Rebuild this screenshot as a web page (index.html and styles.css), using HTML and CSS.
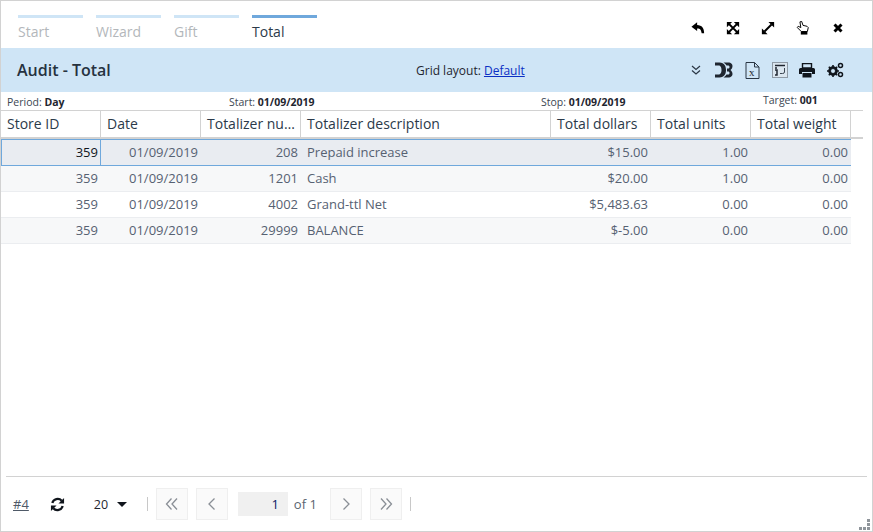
FILE: index.html
```html
<html>
    <head>
        <link rel="stylesheet" href="styles.css">
    </head>
    <body>
        <div class="window">
            <div class="topbar">
                <div class="steps">
                    <div class="step">Start</div>
                    <div class="step">Wizard</div>
                    <div class="step">Gift</div>
                    <div class="step current">Total</div>
                </div>
                <div class="window-tools">
                    <svg width="14" height="14" viewBox="0 0 16 16"><path d="M7 1.5 L0.5 6.5 L7 11.5 V8.6 C10 8.5 11.5 9.5 12.2 14 L15 14 C15 8 12.5 4.8 7 4.5 Z" fill="#000"/></svg>
                    <svg width="14" height="14" viewBox="0 0 16 16"><path d="M3 3 L13 13 M13 3 L3 13" stroke="#000" stroke-width="2.4"/><path d="M1 1 H7 L1 7 Z M15 1 V7 L9 1 Z M1 15 V9 L7 15 Z M15 15 H9 L15 9 Z" fill="#000"/></svg>
                    <svg width="14" height="14" viewBox="0 0 16 16"><path d="M4 12 L12 4" stroke="#000" stroke-width="2.2"/><path d="M8.5 1 H15 V7.5 Z M1 8.5 V15 H7.5 Z" fill="#000"/></svg>
                    <svg width="14" height="14" viewBox="0 0 16 16"><path d="M4.5 1 L6.5 0.5 L8 5 L12.5 6 L14 7.5 L13 12 L6 12 L1.5 7.5 L2.5 6 L5.5 7.5 Z" fill="#fff" stroke="#000" stroke-width="1.1"/><path d="M5.5 12 H13 V15.5 H5.5 Z" fill="#000"/></svg>
                    <svg width="14" height="14" viewBox="0 0 16 16"><path d="M4 4 L12 12 M12 4 L4 12" stroke="#000" stroke-width="3.4"/></svg>
                </div>
            </div>
            <div class="titlebar">
                <div class="title">Audit - Total</div>
                <div class="layout-name">Grid layout: <a href="#">Default</a></div>
                <div class="title-tools">
                    <svg class="chevrons" width="12" height="12" viewBox="0 0 12 12"><path d="M2 2 L6 5.5 L10 2 M2 6.5 L6 10 L10 6.5" fill="none" stroke="#2a3644" stroke-width="1.2"/></svg>
                    <svg class="d3" width="18" height="16" viewBox="0 0 18 16"><path d="M0 0.5 H4.5 C9.5 0.5 11 4.5 11 8 C11 11.5 9.5 15.5 4.5 15.5 H0 V12.5 H3.5 C6 12.5 6.5 10 6.5 8 C6.5 6 6 3.5 3.5 3.5 H0 Z" fill="#1f2630"/><path d="M8.5 0.5 H13 C16.5 0.5 17.5 2.5 17.5 4 C17.5 6 16.5 7 15.5 8 C16.5 9 17.5 10 17.5 12 C17.5 13.5 16.5 15.5 13 15.5 H8.5 C10 14.5 11 13.5 11.5 12.5 H13 C14 12.5 14.5 12 14.5 11 C14.5 10 14 9.5 13 9.5 H12 V6.5 H13 C14 6.5 14.5 6 14.5 5 C14.5 4 14 3.5 13 3.5 H11.5 C11 2.5 10 1.5 8.5 0.5 Z" fill="#1f2630"/></svg>
                    <svg class="excel" width="15" height="17" viewBox="0 0 15 17"><path d="M1 0.5 H9.5 L14 5 V16.5 H1 Z M9.5 0.5 V5 H14" fill="none" stroke="#2a3644"/><text x="4" y="13.5" class="excel-x">x</text></svg>
                    <svg class="report" width="16" height="16" viewBox="0 0 16 16"><rect x="0.5" y="0.5" width="15" height="15" fill="#dbe6ef" stroke="#8f9aa5"/><path d="M3 3.5 H13" stroke="#1f2630" stroke-width="1.5"/><path d="M3 6 H5 M3 8 H5 V13 H3" stroke="#1f2630" stroke-width="1.5" fill="none"/><path d="M12.5 6 V10 Q12.5 11.5 10.5 11.5 H8" fill="none" stroke="#3b4652"/></svg>
                    <svg class="printer" width="16" height="15" viewBox="0 0 16 15"><path d="M3.5 0.5 H12.5 V5 H3.5 Z" fill="none" stroke="#10151c" stroke-width="1.4"/><path d="M1.5 5 H14.5 Q16 5 16 6.5 V11 H13 V9 H3 V11 H0 V6.5 Q0 5 1.5 5 Z" fill="#10151c"/><path d="M3.5 10 H12.5 V14.5 H3.5 Z" fill="#10151c"/></svg>
                    <svg class="gears" width="17" height="16" viewBox="0 0 17 16"><circle cx="6" cy="9" r="3.6" fill="none" stroke="#10151c" stroke-width="2.4"/><path d="M6 3 V15 M0 9 H12 M1.8 4.8 L10.2 13.2 M10.2 4.8 L1.8 13.2" stroke="#10151c" stroke-width="1.6"/><circle cx="6" cy="9" r="2" fill="#cfe5f6"/><circle cx="13.5" cy="3.5" r="2" fill="none" stroke="#10151c" stroke-width="1.5"/><circle cx="13.5" cy="12.5" r="2" fill="none" stroke="#10151c" stroke-width="1.5"/></svg>
                </div>
            </div>
            <div class="filters">
                <span class="filter period">Period: <b>Day</b></span>
                <span class="filter start">Start: <b>01/09/2019</b></span>
                <span class="filter stop">Stop: <b>01/09/2019</b></span>
                <span class="filter target">Target: <b>001</b></span>
            </div>
            <div class="grid-head">
                <table class="grid">
                    <tr>
                        <th class="col">Store ID</th>
                        <th class="col">Date</th>
                        <th class="col">Totalizer number</th>
                        <th class="col-wide">Totalizer description</th>
                        <th class="col">Total dollars</th>
                        <th class="col">Total units</th>
                        <th class="col">Total weight</th>
                    </tr>
                </table>
            </div>
            <div class="grid-body">
                <table class="grid">
                    <tr class="selected">
                        <td class="col num active">359</td>
                        <td class="col num">01/09/2019</td>
                        <td class="col num">208</td>
                        <td class="col-wide">Prepaid increase</td>
                        <td class="col num">$15.00</td>
                        <td class="col num">1.00</td>
                        <td class="col num">0.00</td>
                    </tr>
                    <tr class="alt">
                        <td class="col num">359</td>
                        <td class="col num">01/09/2019</td>
                        <td class="col num">1201</td>
                        <td class="col-wide">Cash</td>
                        <td class="col num">$20.00</td>
                        <td class="col num">1.00</td>
                        <td class="col num">0.00</td>
                    </tr>
                    <tr>
                        <td class="col num">359</td>
                        <td class="col num">01/09/2019</td>
                        <td class="col num">4002</td>
                        <td class="col-wide">Grand-ttl Net</td>
                        <td class="col num">$5,483.63</td>
                        <td class="col num">0.00</td>
                        <td class="col num">0.00</td>
                    </tr>
                    <tr class="alt">
                        <td class="col num">359</td>
                        <td class="col num">01/09/2019</td>
                        <td class="col num">29999</td>
                        <td class="col-wide">BALANCE</td>
                        <td class="col num">$-5.00</td>
                        <td class="col num">0.00</td>
                        <td class="col num">0.00</td>
                    </tr>
                </table>
            </div>
            <div class="pager">
                <a class="record" href="#">#4</a>
                <svg class="refresh" width="15" height="15" viewBox="0 0 16 16"><path d="M2.5 6.5 A5.8 5.8 0 0 1 12.5 4" fill="none" stroke="#10151c" stroke-width="2.4"/><path d="M15 1 V7 H9 Z" fill="#10151c"/><path d="M13.5 9.5 A5.8 5.8 0 0 1 3.5 12" fill="none" stroke="#10151c" stroke-width="2.4"/><path d="M1 15 V9 H7 Z" fill="#10151c"/></svg>
                <span class="page-size">20</span>
                <span class="caret"></span>
                <span class="sep first-sep"></span>
                <button class="page-btn"><svg width="14" height="14" viewBox="0 0 14 14"><path d="M6.5 1.5 L1.5 7 L6.5 12.5 M12 1.5 L7 7 L12 12.5" fill="none" stroke="#8a8f96" stroke-width="1.3"/></svg></button>
                <button class="page-btn"><svg width="14" height="14" viewBox="0 0 14 14"><path d="M9.5 1.5 L4 7 L9.5 12.5" fill="none" stroke="#8a8f96" stroke-width="1.3"/></svg></button>
                <span class="page-input">1</span>
                <span class="page-of">of 1</span>
                <button class="page-btn"><svg width="14" height="14" viewBox="0 0 14 14"><path d="M4.5 1.5 L10 7 L4.5 12.5" fill="none" stroke="#8a8f96" stroke-width="1.3"/></svg></button>
                <button class="page-btn"><svg width="14" height="14" viewBox="0 0 14 14"><path d="M2 1.5 L7 7 L2 12.5 M7.5 1.5 L12.5 7 L7.5 12.5" fill="none" stroke="#8a8f96" stroke-width="1.3"/></svg></button>
                <span class="sep"></span>
            </div>
            <svg class="resize-grip" width="12" height="12" viewBox="0 0 12 12"><path d="M8 0 H11 V3 H8 Z M8 4 H11 V7 H8 Z M8 8 H11 V11 H8 Z M4 8 H7 V11 H4 Z M0 8 H3 V11 H0 Z" fill="#8f959b"/></svg>
        </div>
    </body>
</html>
```

FILE: styles.css
```css
html, body{
    margin: 0;
    padding: 0;
    background-color: #fff;
}
.window{
    position: relative;
    box-sizing: border-box;
    width: 873px;
    height: 532px;
    border: 1px solid #d2d2d2;
    display: flex;
    flex-direction: column;
    font-family: "Open Sans", sans-serif;
    color: #2b3a4a;
    overflow: hidden;
}
.topbar{
    height: 47px;
    flex: none;
    display: flex;
    justify-content: space-between;
    padding: 14px 0 0 17px;
    box-sizing: border-box;
}
.steps{
    display: flex;
    gap: 13px;
}
.step{
    width: 65px;
    border-top: 3px solid #cfe5f6;
    padding-top: 4px;
    font-size: 14px;
    line-height: 20px;
    color: #b3b7bb;
}
.step.current{
    border-top-color: #6fa8dc;
    color: #2b3a4a;
}
.window-tools{
    display: flex;
    gap: 21px;
    padding: 6px 27px 0 0;
}
.titlebar{
    height: 44px;
    flex: none;
    background-color: #cfe5f6;
    display: flex;
    align-items: center;
    padding-left: 16px;
}
.title{
    width: 399px;
    font-size: 16px;
    font-weight: 600;
    color: #26323f;
}
.layout-name{
    width: 274px;
    font-size: 12px;
    color: #1f2630;
}
.layout-name a{
    color: #0b2fc4;
}
.title-tools{
    display: flex;
    align-items: center;
}
.chevrons{
    margin-right: 13px;
}
.excel{
    margin-left: 12px;
}
.excel-x{
    font-family: "Liberation Serif", serif;
    font-size: 11px;
    fill: #1f2630;
}
.report{
    margin-left: 12px;
}
.printer{
    margin-left: 11px;
}
.gears{
    margin-left: 12px;
}
.filters{
    position: relative;
    height: 18px;
    flex: none;
    font-size: 10.5px;
    color: #3b4652;
}
.filter{
    position: absolute;
    top: 3px;
    line-height: 14px;
}
.filter b{
    color: #1f2630;
}
.period{
    left: 6px;
}
.start{
    left: 228px;
}
.stop{
    left: 540px;
}
.target{
    left: 762px;
    top: 1px;
}
.grid{
    border-collapse: separate;
    border-spacing: 0;
    table-layout: fixed;
    width: 850px;
}
.col{
    width: 100px;
}
.col-wide{
    width: 250px;
}
.grid-head{
    height: 26px;
    flex: none;
    border-top: 1px solid #d2d2d2;
    border-bottom: 2px solid #d2d2d2;
    margin-right: 9px;
}
.grid-head .grid{
    height: 26px;
}
.grid th{
    box-sizing: border-box;
    border-right: 1px solid #d2d2d2;
    padding: 0 3px 2px 6px;
    font-size: 14px;
    font-weight: 400;
    text-align: left;
    color: #2b3a4a;
    white-space: nowrap;
    overflow: hidden;
    text-overflow: ellipsis;
}
.grid-body{
    flex: 1;
}
.grid td{
    box-sizing: border-box;
    height: 26px;
    padding: 0 3px 2px 6px;
    font-size: 13px;
    color: #566172;
    border-bottom: 1px solid #ebedf0;
    white-space: nowrap;
}
.grid td.num{
    text-align: right;
}
.alt td{
    background-color: #f7f8f9;
}
.grid .selected td{
    height: 27px;
    background-color: #e9ecf1;
    border-top: 1px solid #6fa8dc;
    border-bottom: 1px solid #6fa8dc;
}
.grid .selected td.active{
    padding-right: 2px;
    border: 1px solid #6fa8dc;
    color: #10151c;
}
.pager{
    height: 55px;
    flex: none;
    margin: 0 5px;
    border-top: 1px solid #d2d2d2;
    box-sizing: border-box;
    display: flex;
    align-items: center;
    padding: 0 0 0 7px;
    font-size: 13px;
    color: #2b3a4a;
}
.record{
    color: #4f5a68;
    margin-right: 21px;
}
.page-size{
    margin-left: 29px;
    width: 14px;
    font-size: 12.5px;
    color: #1f2630;
}
.caret{
    border-top: 5px solid #10151c;
    border-left: 5px solid transparent;
    border-right: 5px solid transparent;
    margin-left: 9px;
}
.sep{
    width: 1px;
    height: 14px;
    background-color: #c8c8c8;
}
.first-sep{
    margin: 0 8px 0 20px;
}
.page-btn{
    box-sizing: border-box;
    width: 32px;
    height: 32px;
    padding: 0;
    margin-right: 8px;
    background-color: #fafafa;
    border: 1px solid #efefef;
    display: flex;
    align-items: center;
    justify-content: center;
}
.page-input{
    box-sizing: border-box;
    width: 50px;
    height: 24px;
    margin-left: 2px;
    padding-right: 9px;
    line-height: 24px;
    text-align: right;
    background-color: #f0f0f0;
    color: #0b1a66;
}
.page-of{
    margin-left: 6px;
    width: 36px;
    color: #5a6470;
}
.resize-grip{
    position: absolute;
    right: 1px;
    bottom: 0;
}
```
